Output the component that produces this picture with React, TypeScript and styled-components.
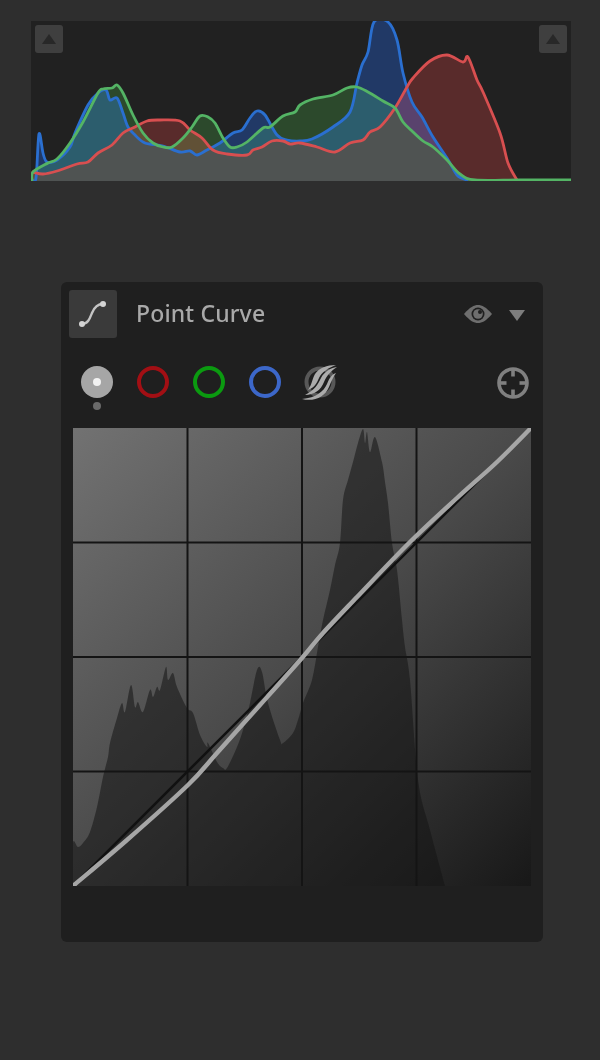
import React from "react"
import styled, { createGlobalStyle } from "styled-components"

const GlobalStyle = createGlobalStyle`
  html, body {
    margin: 0;
    background: #2e2e2e;
    font-family: "Noto Sans", "Open Sans", sans-serif;
  }
`

const Page = styled.div`
  width: 600px;
  height: 1060px;
  padding-top: 21px;
  box-sizing: border-box;
  overflow: hidden;
`

const Histogram = styled.div`
  position: relative;
  width: 540px;
  height: 160px;
  margin-left: 31px;
  background: #212121;

  svg {
    display: block;
  }
`

const ClipButton = styled.div<{ side: "left" | "right" }>`
  position: absolute;
  top: 4px;
  ${props => (props.side === "left" ? "left: 4px;" : "right: 4px;")}
  width: 28px;
  height: 28px;
  border-radius: 3px;
  background: #3f3f3f;
  display: flex;
  align-items: center;
  justify-content: center;

  &::after {
    content: "";
    border-left: 7px solid transparent;
    border-right: 7px solid transparent;
    border-bottom: 10px solid #282828;
  }
`

const Panel = styled.section`
  width: 482px;
  height: 660px;
  margin: 101px 0 0 61px;
  padding: 8px 12px 0 8px;
  box-sizing: border-box;
  background: #1f1f1f;
  border-radius: 6px;
`

const Header = styled.header`
  display: flex;
  align-items: center;
  height: 48px;
`

const IconBox = styled.div`
  width: 48px;
  height: 48px;
  border-radius: 3px;
  background: #3a3a3a;
  display: flex;
  align-items: center;
  justify-content: center;
`

const Title = styled.h2`
  flex: 1;
  margin: 0 0 2px 19px;
  font-size: 23px;
  font-weight: 500;
  letter-spacing: 0.15px;
  line-height: 46px;
  color: #a9a9a9;
`

const HeaderActions = styled.div`
  display: flex;
  align-items: center;
  gap: 17px;
  margin-right: 6px;
`

const Caret = styled.div`
  margin-top: 2px;
  border-left: 8px solid transparent;
  border-right: 8px solid transparent;
  border-top: 11px solid #7d7d7d;
`

const Channels = styled.div`
  display: flex;
  align-items: flex-start;
  height: 90px;
  padding: 28px 2px 0 12px;
  box-sizing: border-box;
  gap: 24px;
`

const Channel = styled.div`
  position: relative;
  width: 32px;
  height: 32px;
`

const RgbDot = styled.div`
  width: 32px;
  height: 32px;
  border-radius: 50%;
  background: #a6a6a6;
  display: flex;
  align-items: center;
  justify-content: center;

  &::after {
    content: "";
    width: 8px;
    height: 8px;
    border-radius: 50%;
    background: #f2f2f2;
  }
`

const ActiveMark = styled.div`
  position: absolute;
  left: 12px;
  top: 36px;
  width: 8px;
  height: 8px;
  border-radius: 50%;
  background: #6a6a6a;
`

const Ring = styled.div<{ color: string }>`
  width: 32px;
  height: 32px;
  box-sizing: border-box;
  border-radius: 50%;
  border: 4px solid ${props => props.color};
`

const LuminanceWrap = styled.div`
  width: 40px;
  height: 40px;
  margin: -4px 0 0 -5px;
`

const TargetWrap = styled.div`
  width: 32px;
  height: 32px;
  margin-top: 1px;
`

const Spacer = styled.div`
  flex: 1;
`

const CurveArea = styled.div`
  width: 458px;
  height: 458px;
  margin-left: 4px;
  background: linear-gradient(135deg, #727272 0%, #4a4a4a 50%, #181818 100%);

  svg {
    display: block;
  }
`

// catmull-rom through "x y, x y, ..." so the traces don't look like polylines
const smooth = (raw: string) => {
  const pts = raw
    .trim()
    .split(/\s*,\s*/)
    .map(p => p.split(/\s+/).map(Number))
  let d = `M${pts[0][0]} ${pts[0][1]}`
  for (let i = 0; i < pts.length - 1; i++) {
    const p0 = pts[Math.max(i - 1, 0)]
    const p1 = pts[i]
    const p2 = pts[i + 1]
    const p3 = pts[Math.min(i + 2, pts.length - 1)]
    const c1x = p1[0] + (p2[0] - p0[0]) / 6
    const c1y = p1[1] + (p2[1] - p0[1]) / 6
    const c2x = p2[0] - (p3[0] - p1[0]) / 6
    const c2y = p2[1] - (p3[1] - p1[1]) / 6
    d += ` C${c1x.toFixed(1)} ${c1y.toFixed(1)} ${c2x.toFixed(1)} ${c2y.toFixed(1)} ${p2[0]} ${p2[1]}`
  }
  return d
}

const redLine = smooth(
  "33 172, 43 174, 57 171, 77 164, 88 162, 98 153, 112 145, 123 133, 135 127, 147 121, 160 120, 180 121, 190 130, 202 138, 213 150, 227 154, 247 155, 253 150, 262 147, 272 141, 283 141, 290 144, 300 143, 317 147, 335 152, 350 143, 363 140, 370 132, 380 127, 395 108, 407 87, 413 78, 430 61, 447 55, 463 62, 468 57, 477 80, 483 92, 500 133, 508 163, 517 180"
)

const greenLine = smooth(
  "32 180, 33 172, 48 163, 57 159, 70 143, 83 122, 98 93, 103 89, 112 88, 117 85, 123 93, 133 115, 143 133, 153 143, 163 147, 172 147, 183 138, 192 127, 200 116, 208 117, 215 123, 223 138, 230 147, 237 147, 247 142, 263 128, 270 127, 283 116, 295 112, 300 105, 313 99, 333 95, 347 88, 357 87, 368 92, 383 101, 395 108, 403 122, 413 132, 423 141, 433 147, 447 160, 460 174, 475 180, 520 180, 571 180"
)

const blueLine = smooth(
  "32 180, 36 178, 39 134, 43 153, 47 162, 57 160, 70 147, 75 133, 88 105, 98 93, 106 90, 110 100, 117 98, 123 113, 128 127, 135 135, 145 143, 163 146, 180 152, 190 151, 197 155, 207 150, 220 143, 233 133, 242 130, 250 118, 257 111, 265 115, 277 135, 287 140, 300 141, 312 139, 333 127, 350 112, 357 83, 362 65, 368 52, 374 22, 388 22, 397 40, 403 73, 412 102, 422 117, 433 137, 447 158, 457 175, 467 180"
)

const closeArea = (line: string) => `${line} L571 181 L31 181 Z`

const ChannelFill = styled.path`
  mix-blend-mode: screen;
`

const HistogramChart = () => (
  <svg width="540" height="160" viewBox="31 21 540 160">
    <defs>
      <clipPath id="red-area">
        <path d={closeArea(redLine)} />
      </clipPath>
      <clipPath id="green-area" clipPath="url(#red-area)">
        <path d={closeArea(greenLine)} />
      </clipPath>
      <clipPath id="shared-area" clipPath="url(#green-area)">
        <path d={closeArea(blueLine)} />
      </clipPath>
    </defs>
    <rect x="31" y="21" width="540" height="160" fill="#212121" />
    <ChannelFill d={closeArea(redLine)} fill="#400c0c" />
    <ChannelFill d={closeArea(greenLine)} fill="#0d2e0d" />
    <ChannelFill d={closeArea(blueLine)} fill="#001c4f" />
    <rect x="31" y="21" width="540" height="160" fill="#4f5352" clipPath="url(#shared-area)" />
    <g fill="none" strokeWidth="2.8" strokeLinejoin="round" strokeLinecap="round">
      <path d={blueLine} stroke="#2a6fd0" />
      <path d={redLine} stroke="#d84f50" />
      <path d={greenLine} stroke="#54b465" />
    </g>
  </svg>
)

const lumaOutline = `${smooth(
  "73 886, 73 843, 78 847, 83 843, 90 832, 97 807, 103 777, 108 757, 110 743, 117 718, 122 703, 125 712, 131 685, 135 707, 138 702, 143 712, 150 690, 153 697, 157 687, 160 690, 166 667, 168 680, 173 673, 177 687, 187 708, 193 713, 200 735, 207 747, 208 743, 217 762, 223 768, 227 768, 237 747, 243 730, 250 703, 257 670, 262 672, 268 703, 280 740, 283 743, 293 733, 298 720, 303 703, 312 680, 318 647, 323 620, 330 590, 335 565, 340 543, 343 500, 348 480, 353 462, 358 443, 363 429, 365 443, 367 432, 370 452, 375 437, 382 462, 385 482, 388 503, 392 543, 397 570, 402 620, 405 647, 410 680, 418 780, 430 830, 445 886"
)} Z`

const curveLine = smooth(
  "73 886, 127 840, 188 785, 217 753, 260 705, 302 658, 323 633, 357 597, 410 542, 457 498, 497 462, 531 428"
)

const PointCurveChart = () => (
  <svg width="458" height="458" viewBox="73 428 458 458">
    <path d={lumaOutline} fill="#141414" fillOpacity="0.55" />
    <g stroke="#141414" strokeWidth="2">
      <line x1="187.5" y1="428" x2="187.5" y2="886" />
      <line x1="302" y1="428" x2="302" y2="886" />
      <line x1="416.5" y1="428" x2="416.5" y2="886" />
      <line x1="73" y1="542.5" x2="531" y2="542.5" />
      <line x1="73" y1="657" x2="531" y2="657" />
      <line x1="73" y1="771.5" x2="531" y2="771.5" />
    </g>
    <line x1="73" y1="886" x2="531" y2="428" stroke="#111" strokeWidth="2.5" />
    <path d={curveLine} fill="none" stroke="#a6a6a6" strokeWidth="4.4" />
  </svg>
)

const CurveIcon = () => (
  <svg width="48" height="48" viewBox="0 0 48 48">
    <path d="M13 34 C19 34 21 28 23 23 C25 18 28 14 34 14" fill="none" stroke="#c4c4c4" strokeWidth="2.4" />
    <circle cx="13" cy="34" r="3" fill="#d4d4d4" />
    <circle cx="34" cy="14" r="3" fill="#d4d4d4" />
  </svg>
)

const EyeIcon = () => (
  <svg width="28" height="20" viewBox="0 0 28 20">
    <path d="M0 10 C6 3 10 1 14 1 C18 1 22 3 28 10 C22 17 18 19 14 19 C10 19 6 17 0 10 Z" fill="#6e6e6e" />
    <circle cx="14" cy="10" r="6.5" fill="#1f1f1f" />
    <circle cx="14" cy="10" r="4.8" fill="#6e6e6e" />
    <circle cx="16" cy="8" r="2" fill="#1f1f1f" />
  </svg>
)

const LuminanceIcon = () => (
  <svg width="40" height="40" viewBox="0 0 40 40">
    <circle cx="20" cy="20" r="13.5" fill="none" stroke="#585858" strokeWidth="4" />
    <g fill="#ababab">
      <path d="M36 3 C27 3 19 6 15 12 C12 17 12 23 8 28 C14 26 17 21 19 16 C22 10 28 6 36 3 Z" />
      <path d="M37 5 C30 6 24 10 21 16 C18 22 15 28 5 33 C14 33 21 28 24 20 C27 13 31 9 37 5 Z" />
      <path d="M36 11 C31 13 29 17 27 22 C24 29 16 36 2 37 C14 40 25 35 29 25 C31 20 33 15 36 11 Z" />
    </g>
  </svg>
)

const TargetIcon = () => (
  <svg width="32" height="32" viewBox="0 0 32 32">
    <g fill="none" stroke="#808080" strokeWidth="3.6">
      <circle cx="16" cy="16" r="14" />
      <line x1="16" y1="2" x2="16" y2="9.5" />
      <line x1="16" y1="22.5" x2="16" y2="30" />
      <line x1="2" y1="16" x2="9.5" y2="16" />
      <line x1="22.5" y1="16" x2="30" y2="16" />
    </g>
  </svg>
)

export default function App() {
  return (
    <Page>
      <GlobalStyle />
      <Histogram>
        <HistogramChart />
        <ClipButton side="left" />
        <ClipButton side="right" />
      </Histogram>
      <Panel>
        <Header>
          <IconBox>
            <CurveIcon />
          </IconBox>
          <Title>Point Curve</Title>
          <HeaderActions>
            <EyeIcon />
            <Caret />
          </HeaderActions>
        </Header>
        <Channels>
          <Channel>
            <RgbDot />
            <ActiveMark />
          </Channel>
          <Ring color="#a20f14" />
          <Ring color="#0b9a10" />
          <Ring color="#3c67c9" />
          <LuminanceWrap>
            <LuminanceIcon />
          </LuminanceWrap>
          <Spacer />
          <TargetWrap>
            <TargetIcon />
          </TargetWrap>
        </Channels>
        <CurveArea>
          <PointCurveChart />
        </CurveArea>
      </Panel>
    </Page>
  )
}
